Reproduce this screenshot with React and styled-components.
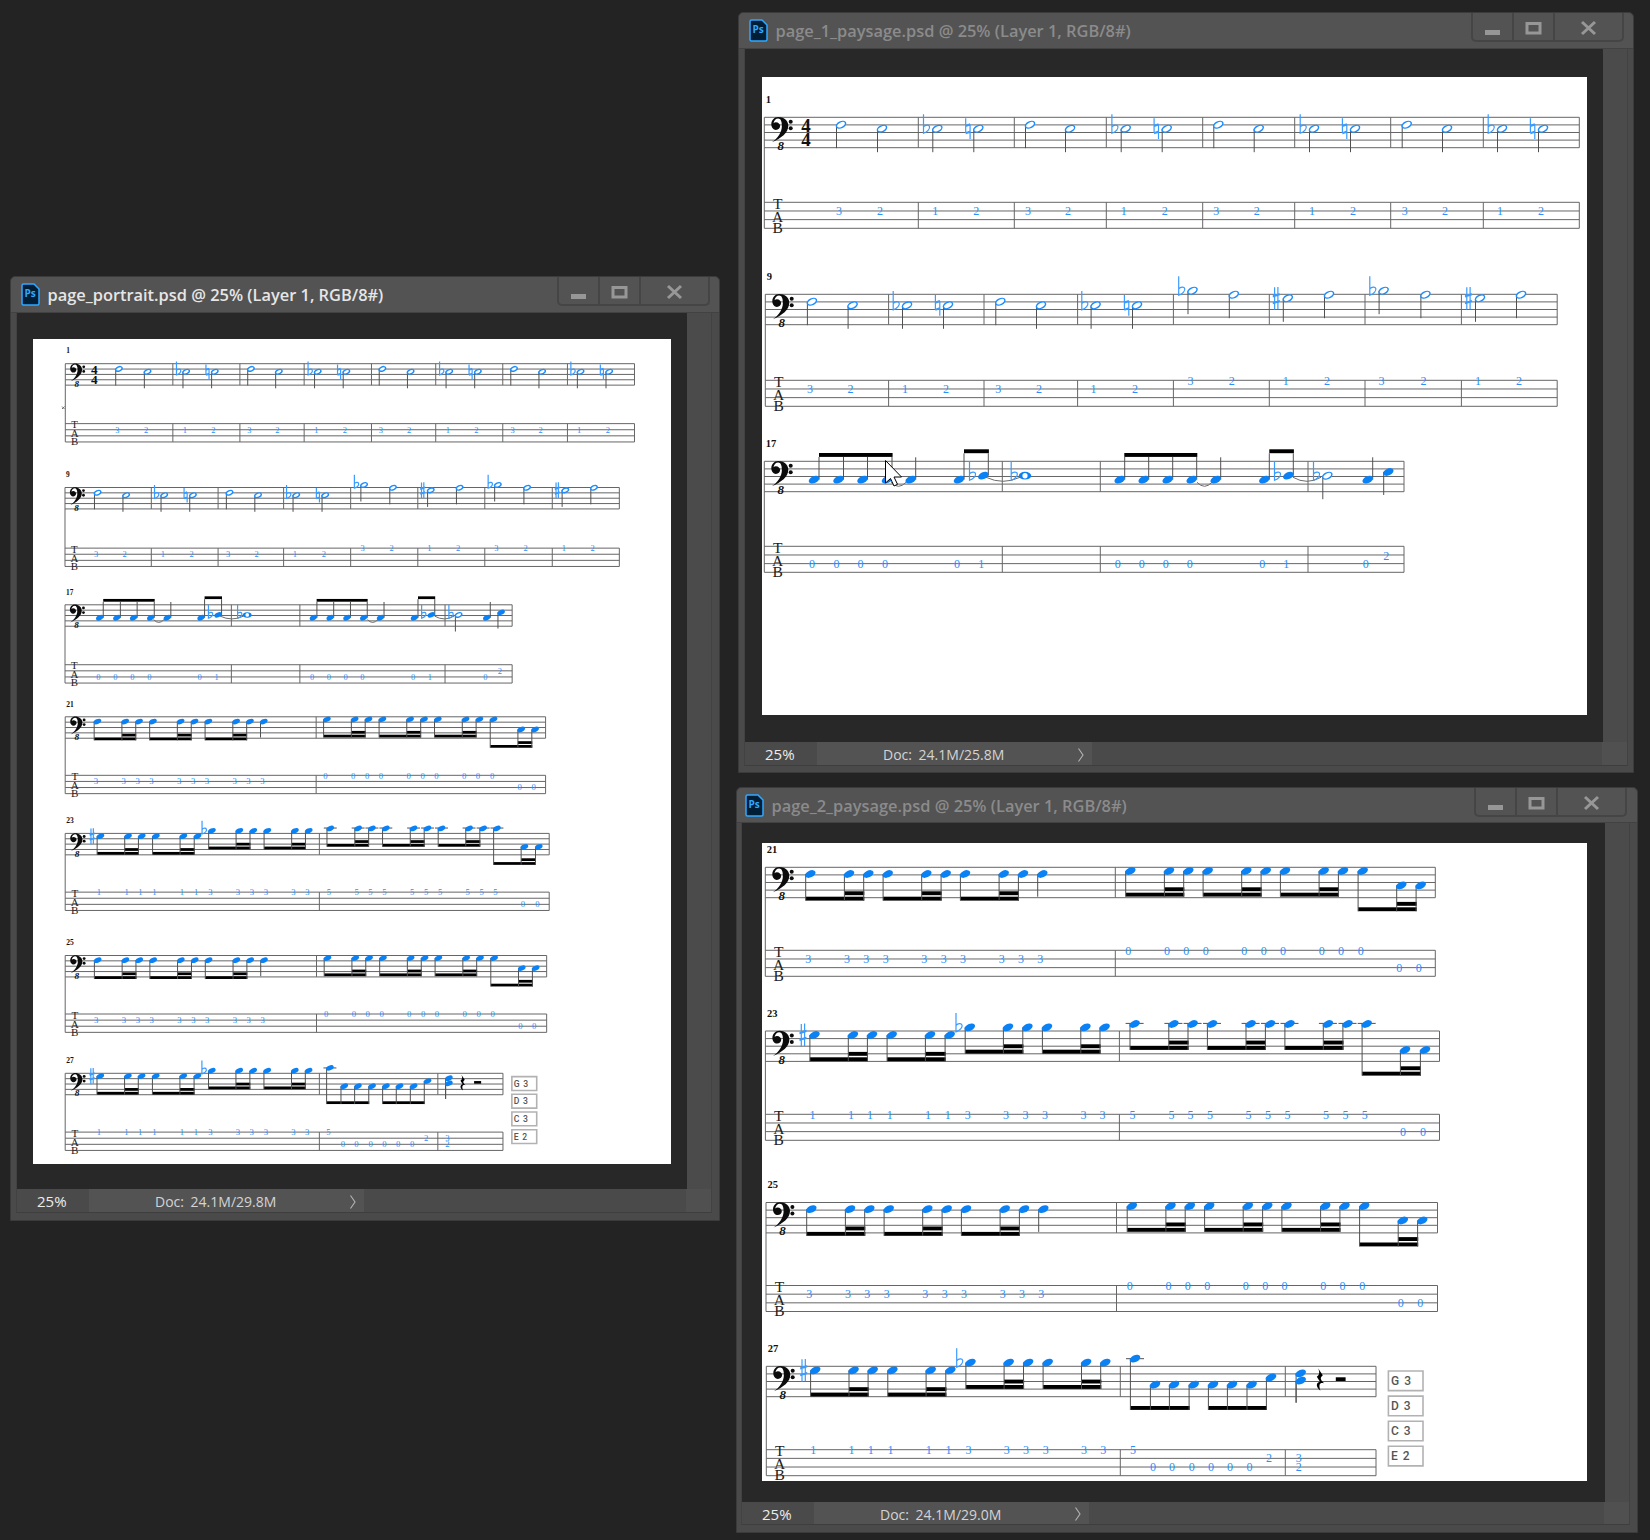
import React from "react";
import styled, { createGlobalStyle } from "styled-components";

const GlobalStyle = createGlobalStyle`
  html, body {
    margin: 0;
    padding: 0;
    background: #232323;
  }
`;

const Desktop = styled.div`
  position: relative;
  width: 1650px;
  height: 1540px;
  overflow: hidden;
  background: #232323;
  font-family: "Open Sans", "Liberation Sans", sans-serif;
`;

const Window = styled.div`
  position: absolute;
  left: ${(p) => p.$left}px;
  top: ${(p) => p.$top}px;
  width: ${(p) => p.$width}px;
  height: ${(p) => p.$height}px;
  box-sizing: border-box;
  display: flex;
  flex-direction: column;
  background: #4a4a4a;
  border: 1px solid #3b3b3b;
  border-radius: 5px 5px 0 0;
`;

const TitleBar = styled.div`
  flex: 0 0 ${(p) => p.$height}px;
  box-sizing: border-box;
  display: flex;
  align-items: center;
  padding-left: ${(p) => p.$pad}px;
  background: #535353;
  border-radius: 5px 5px 0 0;
  border-bottom: 1px solid #424242;
`;

const TitleText = styled.div`
  margin-left: 7.5px;
  font-size: 16.4px;
  font-weight: 600;
  white-space: nowrap;
  color: ${(p) => (p.$active ? "#e6e6e6" : "#8b8b8b")};
`;

const ButtonGroup = styled.div`
  margin-left: auto;
  margin-right: ${(p) => p.$gap}px;
  align-self: flex-start;
  display: flex;
  height: 29px;
  box-sizing: border-box;
  border: 2px solid #454545;
  border-top: none;
  border-radius: 0 0 5px 5px;
`;

const WinButton = styled.div`
  width: ${(p) => p.$width}px;
  display: flex;
  align-items: center;
  justify-content: center;
  & + & {
    border-left: 2px solid #454545;
  }
`;

const Body = styled.div`
  flex: 1;
  min-height: 0;
  display: flex;
  flex-direction: column;
  padding: 0 ${(p) => p.$padRight}px ${(p) => p.$padBottom}px ${(p) => p.$padLeft}px;
`;

const DocRow = styled.div`
  flex: 1;
  min-height: 0;
  display: flex;
  border-left: 1px solid #424242;
`;

const DocArea = styled.div`
  flex: 1;
  min-width: 0;
  box-sizing: border-box;
  padding-left: ${(p) => p.$padLeft}px;
  padding-top: ${(p) => p.$padTop}px;
  background: #282828;
`;

const Paper = styled.div`
  position: relative;
  width: ${(p) => p.$width}px;
  height: ${(p) => p.$height}px;
  background: #fff;
`;

const ScrollTrack = styled.div`
  flex: 0 0 25px;
  background: #4b4b4b;
  border-right: 1px solid #424242;
  box-sizing: border-box;
`;

const StatusBar = styled.div`
  flex: 0 0 ${(p) => p.$height}px;
  min-height: 0;
  display: flex;
  background: #4a4a4a;
  color: #d4d4d4;
  font-size: 14px;
  border-left: 1px solid #424242;
  border-right: 1px solid #424242;
  border-bottom: 1px solid #3e3e3e;
  box-sizing: border-box;
`;

const ZoomField = styled.div`
  width: 72px;
  box-sizing: border-box;
  padding-left: 20px;
  line-height: 25px;
  font-size: 15px;
  color: #ececec;
`;

const DocInfo = styled.div`
  width: 275px;
  box-sizing: border-box;
  padding: 2px 0 0 66px;
  display: flex;
  align-items: center;
  background: #535353;
  word-spacing: 3px;
`;

const Chevron = styled.svg`
  margin-left: auto;
  margin-right: 7px;
`;

const StatusCorner = styled.div`
  margin-left: auto;
  width: 25px;
  background: #505050;
`;

const Score = styled.svg`
  display: block;
  width: 100%;
  height: 100%;
  overflow: visible;
  line, path, ellipse, rect {
    vector-effect: non-scaling-stroke;
  }
`;

const CursorIcon = styled.svg`
  position: absolute;
  left: ${(p) => p.$left}px;
  top: ${(p) => p.$top}px;
`;

const StaffLine = styled.line`
  stroke: #666;
  stroke-width: 1;
`;

const Stem = styled.line`
  stroke: #505050;
  stroke-width: 1;
`;

const Beam = styled.rect`
  fill: #000;
`;

const Tie = styled.path`
  fill: none;
  stroke: #6e6e6e;
  stroke-width: 1;
`;

const AccidentalMark = styled.path`
  fill: none;
  stroke: #3a9bff;
  stroke-width: 1.2;
`;

const FilledHead = styled.ellipse`
  fill: #0a82f5;
`;

const HollowHead = styled.ellipse`
  fill: #fff;
  stroke: #1b8dff;
  stroke-width: 1.4;
`;

const TabDigit = styled.text`
  font-family: "Liberation Serif", serif;
  font-size: 12px;
  fill: #2a90fb;
  text-anchor: middle;
`;

const TabLetter = styled.text`
  font-family: "Liberation Serif", serif;
  font-size: 15.5px;
  fill: #222;
  text-anchor: middle;
`;

const MeasureLabel = styled.text`
  font-family: "Liberation Serif", serif;
  font-size: 10.5px;
  font-weight: bold;
  fill: #111;
`;

const OctaveMark = styled.text`
  font-family: "Liberation Serif", serif;
  font-size: 13px;
  font-weight: bold;
  font-style: italic;
  fill: #111;
  text-anchor: middle;
`;

const MeterDigit = styled.text`
  font-family: "Liberation Serif", serif;
  font-size: 19px;
  font-weight: bold;
  fill: #111;
  text-anchor: middle;
`;

const TuningBox = styled.rect`
  fill: #fff;
  stroke: #b2b2b2;
  stroke-width: 1.6;
`;

const TuningText = styled.text`
  font-family: Roboto, "Liberation Sans", sans-serif;
  font-size: 12px;
  font-weight: 500;
  letter-spacing: 1px;
  fill: #555;
`;

// notation helpers, x values are the measured landscape pixels
const half = (x, y, acc, fret, ty) => ({ kind: "half", x, y, acc, stemX: x - 4.5, to: y + 23.5, fret, ty });
const up = (x, y, to, fret, ty, acc) => ({ kind: "fill", x, y, acc, stemX: x + 5, to, fret, ty });
const down = (x, y, to, fret, ty, acc) => ({ kind: "fill", x, y, acc, stemX: x - 4.6, to, fret, ty });

const figure = (xs, ys, top, second, frets, tys) => ({
  notes: xs.map((x, i) => down(x, ys[i], top + 4, frets[i], tys[i])),
  beams: [
    { x1: xs[0] - 4.6, x2: xs[xs.length - 1] - 4.6, y: top },
    ...(second ? [{ x1: xs[second] - 4.6, x2: xs[xs.length - 1] - 4.6, y: top - 5.4 }] : []),
  ],
});

const merge = (figs) => ({
  notes: figs.flatMap((f) => f.notes),
  beams: figs.flatMap((f) => f.beams),
});

const CYCLE = [3, 2, 1, 2];

const SYS_1 = {
  label: "1",
  x0: 764.3,
  end: 1579.3,
  tabY: 85,
  meter: true,
  bars: [918.3, 1014.3, 1106.3, 1202.7, 1294.7, 1390.7, 1483.3],
  beams: [],
  notes: [
    [841, 7.4], [882, 11.4], [937.3, 11.4, "flat"], [978.3, 11.4, "natural"],
    [1030, 7.4], [1070, 11.4], [1125.7, 11.4, "flat"], [1166.7, 11.4, "natural"],
    [1218.3, 7.4], [1258.7, 11.4], [1314, 11.4, "flat"], [1355, 11.4, "natural"],
    [1406.7, 7.4], [1447, 11.4], [1502, 11.4, "flat"], [1543, 11.4, "natural"],
  ].map((n, i) => half(n[0], n[1], n[2], CYCLE[i % 4], 9)),
};

const SYS_9 = {
  label: "9",
  x0: 765.3,
  end: 1557.2,
  tabY: 86,
  bars: [888.6, 984, 1077.6, 1173.4, 1269.3, 1365, 1461.4],
  beams: [],
  notes: [
    [811.9, 7.4], [852.6, 11], [907, 11, "flat"], [948, 11, "natural"],
    [1000.3, 7.4], [1041, 11], [1095.6, 11, "flat"], [1137, 11, "natural"],
    [1192.5, -3.6, "flat"], [1233.8, 0.4], [1287.8, 4, "sharp"], [1329, 0.4],
    [1383.6, -3.6, "flat"], [1425.4, 0.4], [1480, 4, "sharp"], [1521, 0.4],
  ].map((n, i) => half(n[0], n[1], n[2], CYCLE[i % 4], i < 8 ? 9 : 0.7)),
};

const SYS_17 = {
  label: "17",
  x0: 764.3,
  end: 1404,
  tabY: 85,
  bars: [1002.3, 1100.3, 1308],
  notes: [
    up(814, 18.4, -4.3, 0, 17.7),
    up(838.5, 18.4, -4.3, 0, 17.7),
    up(862.5, 18.4, -4.3, 0, 17.7),
    up(887, 18.4, -4.3, 0, 17.7),
    up(910.7, 18.4, -4),
    up(959, 18.4, -8, 0, 17.7),
    up(983.3, 14.4, -8, 1, 17.7, "flat"),
    { kind: "whole", x: 1025, y: 14.4, acc: "flat" },
    up(1119.7, 18.4, -4.3, 0, 17.7),
    up(1143.7, 18.4, -4.3, 0, 17.7),
    up(1167.7, 18.4, -4.3, 0, 17.7),
    up(1191.7, 18.4, -4.3, 0, 17.7),
    up(1215.7, 18.4, -4),
    up(1264.3, 18.4, -8, 0, 17.7),
    up(1288.3, 14.4, -8, 1, 17.7, "flat"),
    half(1327.3, 14.4, "flat", undefined, undefined),
    up(1367.7, 18.4, -4, 0, 17.7),
    down(1388.3, 10.7, 33.7, 2, 9.4),
  ],
  beams: [
    { x1: 819, x2: 892, y: -8.3 },
    { x1: 964, x2: 988.3, y: -12 },
    { x1: 1124.3, x2: 1196.7, y: -8.3 },
    { x1: 1269.3, x2: 1293.3, y: -12 },
  ],
  ties: [
    [891, 906, 21],
    [986, 1020, 16],
    [1197, 1212, 21],
    [1293, 1321, 16],
  ],
};

const measureOne = (shift) =>
  [
    figure([810.3 + shift, 849 + shift, 868.3 + shift], [6.7, 6.7, 6.7], 29.4, 1, [3, 3, 3], [8.7, 8.7, 8.7]),
    figure([887.7 + shift, 926.3 + shift, 945.7 + shift], [6.7, 6.7, 6.7], 29.4, 1, [3, 3, 3], [8.7, 8.7, 8.7]),
    figure([965 + shift, 1003.7 + shift, 1023 + shift], [6.7, 6.7, 6.7], 29.4, 1, [3, 3, 3], [8.7, 8.7, 8.7]),
    { notes: [down(1042.3 + shift, 6.7, 29.4, 3, 8.7)], beams: [] },
  ];

const measureTwo = (shift) =>
  [
    figure([1130.3 + shift, 1169 + shift, 1188.3 + shift], [3.7, 3.7, 3.7], 25.4, 1, [0, 0, 0], [0.7, 0.7, 0.7]),
    figure([1207.7 + shift, 1246.3 + shift, 1265.7 + shift], [3.7, 3.7, 3.7], 25.4, 1, [0, 0, 0], [0.7, 0.7, 0.7]),
    figure([1285 + shift, 1323.7 + shift, 1343 + shift], [3.7, 3.7, 3.7], 25.4, 1, [0, 0, 0], [0.7, 0.7, 0.7]),
    figure([1362.7 + shift, 1401.3 + shift, 1420.7 + shift], [3.7, 18, 18], 40, 1, [0, 0, 0], [0.7, 17.3, 17.3]),
  ];

const SYS_21 = {
  label: "21",
  x0: 765.3,
  end: 1435.3,
  tabY: 83,
  bars: [1115.3],
  ...merge([...measureOne(0), ...measureTwo(0)]),
};

const SYS_25 = {
  label: "25",
  x0: 766,
  end: 1437.5,
  tabY: 83,
  bars: [1116.5],
  ...merge([...measureOne(1), ...measureTwo(1.5)]),
};

const firstHalf = (s) => [
  figure([814.5 + s, 852.9 + s, 872 + s], [4, 4, 4], 26.3, 1, [1, 1, 1], [0.7, 0.7, 0.7]),
  figure([891.7 + s, 930 + s, 949.7 + s], [4, 4, 4], 26.3, 1, [1, 1, 1], [0.7, 0.7, 0.7]),
  figure([969.8 + s, 1008 + s, 1027.4 + s], [-3.7, -3.7, -3.7], 18.7, 1, [3, 3, 3], [0.7, 0.7, 0.7]),
  figure([1047 + s, 1085.4 + s, 1104.6 + s], [-3.7, -3.7, -3.7], 18.7, 1, [3, 3, 3], [0.7, 0.7, 0.7]),
];

const marked = (fig, index, acc) => ({
  ...fig,
  notes: fig.notes.map((n, i) => (i === index ? { ...n, acc } : n)),
});

const withAccidentals = (figs) => [
  marked(figs[0], 0, "sharp"),
  figs[1],
  marked(figs[2], 0, "flat"),
  figs[3],
];

const SYS_23 = {
  label: "23",
  x0: 765.4,
  end: 1439.5,
  tabY: 83.3,
  bars: [1119.4],
  ...merge([
    ...withAccidentals(firstHalf(0)),
    figure([1134.6, 1173.4, 1192.6], [-7, -7, -7], 15, 1, [5, 5, 5], [0.7, 0.7, 0.7]),
    figure([1212, 1250.6, 1270], [-7, -7, -7], 15, 1, [5, 5, 5], [0.7, 0.7, 0.7]),
    figure([1289.5, 1327.9, 1347.5], [-7, -7, -7], 15, 1, [5, 5, 5], [0.7, 0.7, 0.7]),
    figure([1366.7, 1405, 1425], [-7, 19, 19], 40.7, 1, [5, 0, 0], [0.7, 17.7, 17.7]),
  ]),
};

const SYS_27 = {
  label: "27",
  x0: 766.3,
  end: 1376,
  tabY: 83.4,
  bars: [1120.3, 1285.3],
  coda: true,
  ...merge([
    ...withAccidentals(firstHalf(0.7)),
    figure([1135, 1155, 1174, 1193.7], [-7.6, 18.4, 18.4, 18.4], 39.7, null, [5, 0, 0, 0], [0.7, 17, 17, 17]),
    figure([1213, 1232, 1251.6, 1271], [18.4, 18.4, 18.4, 11], 39.7, null, [0, 0, 0, 2], [17, 17, 17, 8.7]),
    {
      notes: [down(1300.7, 7, 36.4, 3, 8.7), down(1300.7, 14.4, 36.4, 2, 17.5)],
      beams: [],
    },
  ]),
};

const TUNINGS = ["G 3", "D 3", "C 3", "E 2"];

const ACCIDENTALS = {
  flat: "M-13.8 -14.4V4.6C-9.5 3 -7.2 0 -7.8 -2.2C-8.4 -4.4 -12 -4 -13.8 -1.8",
  natural: "M-12.6 -10.4V4.4M-8.2 -4.2V10.4M-12.6 -3.2L-8.2 -4.8M-12.6 -2.2L-8.2 -3.8M-12.6 4L-8.2 2.4M-12.6 5L-8.2 3.4",
  sharp: "M-13.2 -11V11.4M-9.9 -11.4V11M-15 -2.4L-8 -4.6M-15 -1.4L-8 -3.6M-15 4.4L-8 2.2M-15 5.4L-8 3.2",
};

function Note({ note }) {
  const { kind, x, y, acc, stemX, to } = note;
  const spin = `rotate(-25 ${x} ${y})`;
  return (
    <g>
      {y <= -6 && <Stem x1={x - 9} x2={x + 9} y1={-7.6} y2={-7.6} />}
      {stemX !== undefined && <Stem x1={stemX} x2={stemX} y1={y} y2={to} />}
      {kind === "fill" && <FilledHead cx={x} cy={y} rx={5.6} ry={3.4} transform={spin} />}
      {kind === "half" && <HollowHead cx={x} cy={y} rx={4.9} ry={2.9} transform={spin} />}
      {kind === "whole" && (
        <g>
          <FilledHead cx={x} cy={y} rx={6.2} ry={3.9} />
          <ellipse cx={x} cy={y} rx={2.6} ry={2.7} fill="#fff" />
        </g>
      )}
      {acc && <AccidentalMark d={ACCIDENTALS[acc]} transform={`translate(${x} ${y})`} />}
    </g>
  );
}

function Clef() {
  return (
    <g>
      <path
        fill="#0c0c0c"
        d="M7.6 25C17 21 24 15.5 24 8.5C24 3 19 -0.3 14 -0.3C9.8 -0.3 7 3 7 7C7 10.4 9.2 12.6 11.6 12.6C14 12.6 15.8 10.8 15.8 8.8C15.8 6.8 14 5 11.6 5C10.6 5 9.8 5.4 9.2 5.9C9.8 3 11.6 1.2 13.8 1.2C16.4 1.2 17.6 4 17.6 8.5C17.6 15 13.5 21 7.6 25Z"
      />
      <circle cx={26.4} cy={4.4} r={2} fill="#0c0c0c" />
      <circle cx={26.4} cy={11} r={2} fill="#0c0c0c" />
      <OctaveMark x={16.4} y={32.8}>8</OctaveMark>
    </g>
  );
}

function System({ spec, x, y, sx = 1, sy = 1 }) {
  const { x0, end, tabY, bars, notes, beams, ties = [], label, meter, coda } = spec;
  const staff = [0, 7.6, 15.2, 22.8, 30.4];
  const strings = [0, 8.67, 17.33, 26];
  const edges = [...bars, end];
  return (
    <g transform={`translate(${x - x0 * sx} ${y}) scale(${sx} ${sy})`}>
      <MeasureLabel x={x0 + 1.5} y={-14.5}>{label}</MeasureLabel>
      {staff.map((ly) => (
        <StaffLine key={ly} x1={x0} x2={end} y1={ly} y2={ly} />
      ))}
      {strings.map((ly) => (
        <StaffLine key={ly} x1={x0} x2={end} y1={tabY + ly} y2={tabY + ly} />
      ))}
      <StaffLine x1={x0} x2={x0} y1={0} y2={tabY + 26} />
      {edges.map((bx) => (
        <g key={bx}>
          <StaffLine x1={bx} x2={bx} y1={0} y2={30.4} />
          <StaffLine x1={bx} x2={bx} y1={tabY} y2={tabY + 26} />
        </g>
      ))}
      <g transform={`translate(${x0} 0)`}>
        <Clef />
        {meter && (
          <g>
            <MeterDigit x={41.7} y={14.6}>4</MeterDigit>
            <MeterDigit x={41.7} y={29}>4</MeterDigit>
          </g>
        )}
        <TabLetter x={13.4} y={tabY + 6.4}>T</TabLetter>
        <TabLetter x={13.4} y={tabY + 19.4}>A</TabLetter>
        <TabLetter x={13.4} y={tabY + 30.8}>B</TabLetter>
      </g>
      {ties.map(([a, b, ly]) => (
        <Tie key={a} d={`M${a} ${ly}Q${(a + b) / 2} ${ly + 8} ${b} ${ly}`} />
      ))}
      {beams.map((b, i) => (
        <Beam key={i} x={b.x1} y={b.y} width={b.x2 - b.x1 + 0.6} height={3.9} />
      ))}
      {notes.map((n, i) => (
        <Note key={i} note={n} />
      ))}
      {notes
        .filter((n) => n.fret !== undefined)
        .map((n, i) => (
          <TabDigit key={i} x={n.x - 2} y={tabY + n.ty + 4}>
            {n.fret}
          </TabDigit>
        ))}
      {coda && (
        <g>
          <path
            fill="#000"
            d="M1318 2L1322.8 9C1320 11.5 1320 13 1324 17C1320.5 16 1318 17 1320.4 24.4C1316 21 1315.5 16.5 1320 15.5L1316.8 10.5C1319.5 8.5 1320 6 1318 2Z"
          />
          <Beam x={1335.8} y={11} width={9.8} height={3.7} />
          {TUNINGS.map((t, i) => (
            <g key={t}>
              <TuningBox x={1388.4} y={4.7 + i * 25.1} width={34.6} height={19.6} />
              <TuningText x={1391} y={18.9 + i * 25.1}>{t}</TuningText>
            </g>
          ))}
        </g>
      )}
    </g>
  );
}

function PsIcon() {
  return (
    <svg width="19" height="23" viewBox="0 0 19 23">
      <path
        d="M2.5 1H13L18 6V20.5C18 21.3 17.3 22 16.5 22H2.5C1.7 22 1 21.3 1 20.5V2.5C1 1.7 1.7 1 2.5 1Z"
        fill="#001e36"
        stroke="#31a8ff"
        strokeWidth="1.5"
      />
      <text x="3.5" y="13.5" fill="#31a8ff" fontSize="10" fontWeight="700" fontFamily="Open Sans, sans-serif">
        Ps
      </text>
    </svg>
  );
}

function WindowButtons({ gap }) {
  return (
    <ButtonGroup $gap={gap}>
      <WinButton $width={39}>
        <svg width="39" height="27" viewBox="0 0 39 27">
          <rect x="12" y="17" width="15" height="5" fill="#979797" />
        </svg>
      </WinButton>
      <WinButton $width={39}>
        <svg width="39" height="27" viewBox="0 0 39 27">
          <rect x="13" y="10.5" width="13" height="9.5" fill="none" stroke="#979797" strokeWidth="3" />
        </svg>
      </WinButton>
      <WinButton $width={67}>
        <svg width="67" height="27" viewBox="0 0 67 27">
          <path d="M27 9L40 21M40 9L27 21" stroke="#979797" strokeWidth="3" fill="none" />
        </svg>
      </WinButton>
    </ButtonGroup>
  );
}

function DocWindow({ left, top, width, height, titleH, titlePad, title, active, bodyLeft, padRight, padBottom, statusH, padLeft, padTop, paperW, paperH, doc, gap, children }) {
  return (
    <Window $left={left} $top={top} $width={width} $height={height}>
      <TitleBar $height={titleH} $pad={titlePad}>
        <PsIcon />
        <TitleText $active={active}>{title}</TitleText>
        <WindowButtons gap={gap} />
      </TitleBar>
      <Body $padLeft={bodyLeft} $padRight={padRight} $padBottom={padBottom}>
        <DocRow>
          <DocArea $padLeft={padLeft} $padTop={padTop}>
            <Paper $width={paperW} $height={paperH}>{children}</Paper>
          </DocArea>
          <ScrollTrack />
        </DocRow>
        <StatusBar $height={statusH}>
          <ZoomField>25%</ZoomField>
          <DocInfo>
            Doc: {doc}
            <Chevron width="8" height="16" viewBox="0 0 8 16">
              <path d="M1.5 1.5L6 8L1.5 14.5" fill="none" stroke="#b4b4b4" strokeWidth="1.1" />
            </Chevron>
          </DocInfo>
          <StatusCorner />
        </StatusBar>
      </Body>
    </Window>
  );
}

const PORTRAIT = [
  { spec: SYS_1, x: 32.3, y: 24.7, sx: 0.6984, sy: 0.705 },
  { spec: SYS_9, x: 32, y: 148.5, sx: 0.7, sy: 0.705 },
  { spec: SYS_17, x: 32, y: 265.8, sx: 0.699, sy: 0.705 },
  { spec: SYS_21, x: 32.2, y: 377.8, sx: 0.717, sy: 0.705 },
  { spec: SYS_23, x: 32.2, y: 494.4, sx: 0.718, sy: 0.705 },
  { spec: SYS_25, x: 32.2, y: 616.5, sx: 0.717, sy: 0.705 },
  { spec: SYS_27, x: 32.2, y: 734.3, sx: 0.718, sy: 0.705 },
];

const PAGE_ONE = [
  { spec: SYS_1, x: 2.3, y: 40.3 },
  { spec: SYS_9, x: 3.3, y: 217.3 },
  { spec: SYS_17, x: 2.3, y: 384.3 },
];

const PAGE_TWO = [
  { spec: SYS_21, x: 3.3, y: 24.3 },
  { spec: SYS_23, x: 3.4, y: 188 },
  { spec: SYS_25, x: 4, y: 359.5 },
  { spec: SYS_27, x: 4.3, y: 523.3 },
];

function Sheet({ systems, children }) {
  return (
    <Score>
      {systems.map((s) => (
        <System key={s.spec.label} {...s} />
      ))}
      {children}
    </Score>
  );
}

export default function App() {
  return (
    <Desktop>
      <GlobalStyle />
      <DocWindow
        left={10}
        top={276}
        width={710}
        height={945}
        titleH={36}
        titlePad={10}
        title="page_portrait.psd @ 25% (Layer 1, RGB/8#)"
        active
        bodyLeft={5}
        padRight={7}
        padBottom={7}
        statusH={24}
        padLeft={16}
        padTop={26}
        paperW={638}
        paperH={825}
        doc="24.1M/29.8M"
        gap={9}
      >
        <Sheet systems={PORTRAIT}>
          <Tie d="M29 67.5L31.5 70M31.5 67.5L29 70" />
        </Sheet>
      </DocWindow>
      <DocWindow
        left={738}
        top={12}
        width={896}
        height={761}
        titleH={36}
        titlePad={10}
        title="page_1_paysage.psd @ 25% (Layer 1, RGB/8#)"
        bodyLeft={5}
        padRight={5}
        padBottom={6}
        statusH={24}
        padLeft={17}
        padTop={28}
        paperW={825}
        paperH={638}
        doc="24.1M/25.8M"
        gap={9}
      >
        <Sheet systems={PAGE_ONE} />
        <CursorIcon $left={123} $top={383} width="19" height="27" viewBox="0 0 19 27">
          <path d="M0.5 0.5V23L5.5 18.5L9 26L12.5 24.3L9 17H16.5Z" fill="#fff" stroke="#000" strokeWidth="1" />
        </CursorIcon>
      </DocWindow>
      <DocWindow
        left={736}
        top={787}
        width={902}
        height={746}
        titleH={35}
        titlePad={8}
        title="page_2_paysage.psd @ 25% (Layer 1, RGB/8#)"
        bodyLeft={4}
        padRight={7}
        padBottom={7}
        statusH={23}
        padLeft={20}
        padTop={20}
        paperW={825}
        paperH={638}
        doc="24.1M/29.0M"
        gap={10}
      >
        <Sheet systems={PAGE_TWO} />
      </DocWindow>
    </Desktop>
  );
}
